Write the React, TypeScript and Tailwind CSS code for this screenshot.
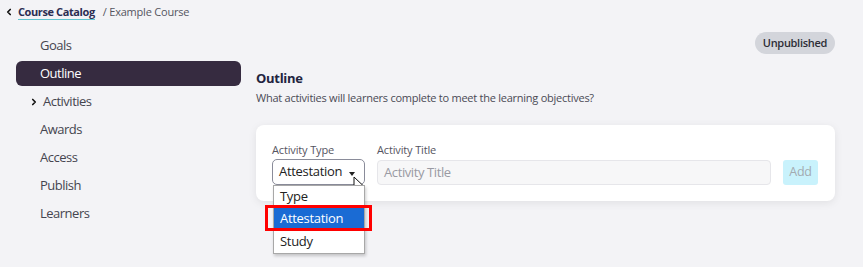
import { ChevronLeft, ChevronRight } from "lucide-react"

const navItems = ["Goals", "Outline", "Activities", "Awards", "Access", "Publish", "Learners"]

function Cursor() {
  return (
    <svg width="12" height="17" viewBox="0 0 12 17" className="absolute left-[80px] top-[16px]">
      <path d="M1 1 L1 13 L4 10 L6.5 15.5 L8.5 14.5 L6 9.5 L10 9.5 Z" fill="white" stroke="#111" strokeWidth="1" strokeLinejoin="round" />
    </svg>
  )
}

export default function App() {
  return (
    <div className="w-[863px] h-[267px] overflow-hidden bg-[#f3f3f6] font-['Open_Sans',sans-serif] text-[#3b3b45]">
      <div className="flex items-center h-[23px] pl-[4px] pt-[1px]">
        <ChevronLeft className="w-[10px] h-[10px] text-[#111]" strokeWidth={4} />
        <a className="ml-[4px] text-[11px] font-bold tracking-[-0.4px] text-[#2b2d52] border-b border-[#5fc4d0] leading-[14px]">
          Course Catalog
        </a>
        <span className="ml-[8px] text-[11px] tracking-[-0.2px] text-[#55555f]">/ Example Course</span>
      </div>
      <div className="flex pt-[10px]">
        <div className="w-[241px] pl-4 shrink-0">
          {navItems.map((item) => (
            <div
              key={item}
              className={`relative h-[25px] mb-[3px] flex items-center pl-[24px] text-[13px] tracking-[-0.5px] rounded-[6px] ${
                item === "Outline" ? "bg-[#362b40] text-white" : "text-[#45454f]"
              }`}
            >
              {item === "Activities" && (
                <ChevronRight className="absolute left-[13px] w-[10px] h-[10px] text-[#111]" strokeWidth={4} />
              )}
              <span className={item === "Activities" ? "ml-[3px]" : ""}>{item}</span>
            </div>
          ))}
        </div>
        <div className="flex-1 pl-[15px] pr-[28px] -mt-[1px]">
          <div className="flex justify-end">
            <span className="h-[22px] px-[8px] flex items-center rounded-full bg-[#d3d5db] text-[11px] tracking-[-0.3px] font-semibold text-[#2d2d36]">
              Unpublished
            </span>
          </div>
          <h2 className="mt-[14px] text-[13px] tracking-[-0.3px] font-bold text-[#22243f] leading-[20px]">Outline</h2>
          <p className="mt-[2px] text-[11px] tracking-[-0.25px] text-[#4a4a55] leading-[16px]">
            What activities will learners complete to meet the learning objectives?
          </p>
          <div className="mt-[19px] bg-white rounded-[8px] shadow-[0_2px_8px_rgba(0,0,0,0.08)] pl-[16px] pr-[17px] pt-[17px] pb-[16px] flex items-end gap-[12px]">
            <div className="relative">
              <div className="text-[11px] tracking-[-0.15px] leading-[16px] text-[#55555f] mb-[1px]">Activity Type</div>
              <div className="relative w-[93px] h-[26px] border border-[#8a8c9a] rounded-[5px] flex items-center pl-[6px] text-[13px] tracking-[-0.3px] text-[#222]">
                Attestation
                <svg width="6" height="4" viewBox="0 0 6 4" className="absolute left-[76px] top-[12px]">
                  <path d="M0 0 L6 0 L3 4 Z" fill="#222" />
                </svg>
                <Cursor />
              </div>
              <div className="absolute left-[1px] top-[43px] w-[92px] bg-white border border-[#a8a8a8] shadow-[1px_2px_3px_rgba(0,0,0,0.2)] text-[13px] tracking-[-0.3px] text-[#222] z-10">
                <div className="h-[22px] flex items-center pl-[6px]">Type</div>
                <div className="h-[22px] flex items-center pl-[6px] bg-[#1a6bd4] text-white">Attestation</div>
                <div className="h-[23px] flex items-center pl-[6px]">Study</div>
              </div>
              <div className="absolute left-[-7px] top-[63px] w-[107px] h-[26px] border-[3px] border-[#ff0000] z-20" />
            </div>
            <div className="flex-1">
              <div className="text-[11px] tracking-[-0.15px] leading-[16px] text-[#55555f] mb-[2px]">Activity Title</div>
              <div className="h-[25px] border border-[#e6e6ea] bg-[#f7f7f8] rounded-[4px] flex items-center pl-[6px] text-[13px] tracking-[-0.4px] text-[#9a9aa3]">
                Activity Title
              </div>
            </div>
            <button className="h-[25px] w-[35px] rounded-[3px] bg-[#c9f2fc] text-[12.5px] tracking-[-0.3px] text-[#a3aab0]">Add</button>
          </div>
        </div>
      </div>
    </div>
  )
}
